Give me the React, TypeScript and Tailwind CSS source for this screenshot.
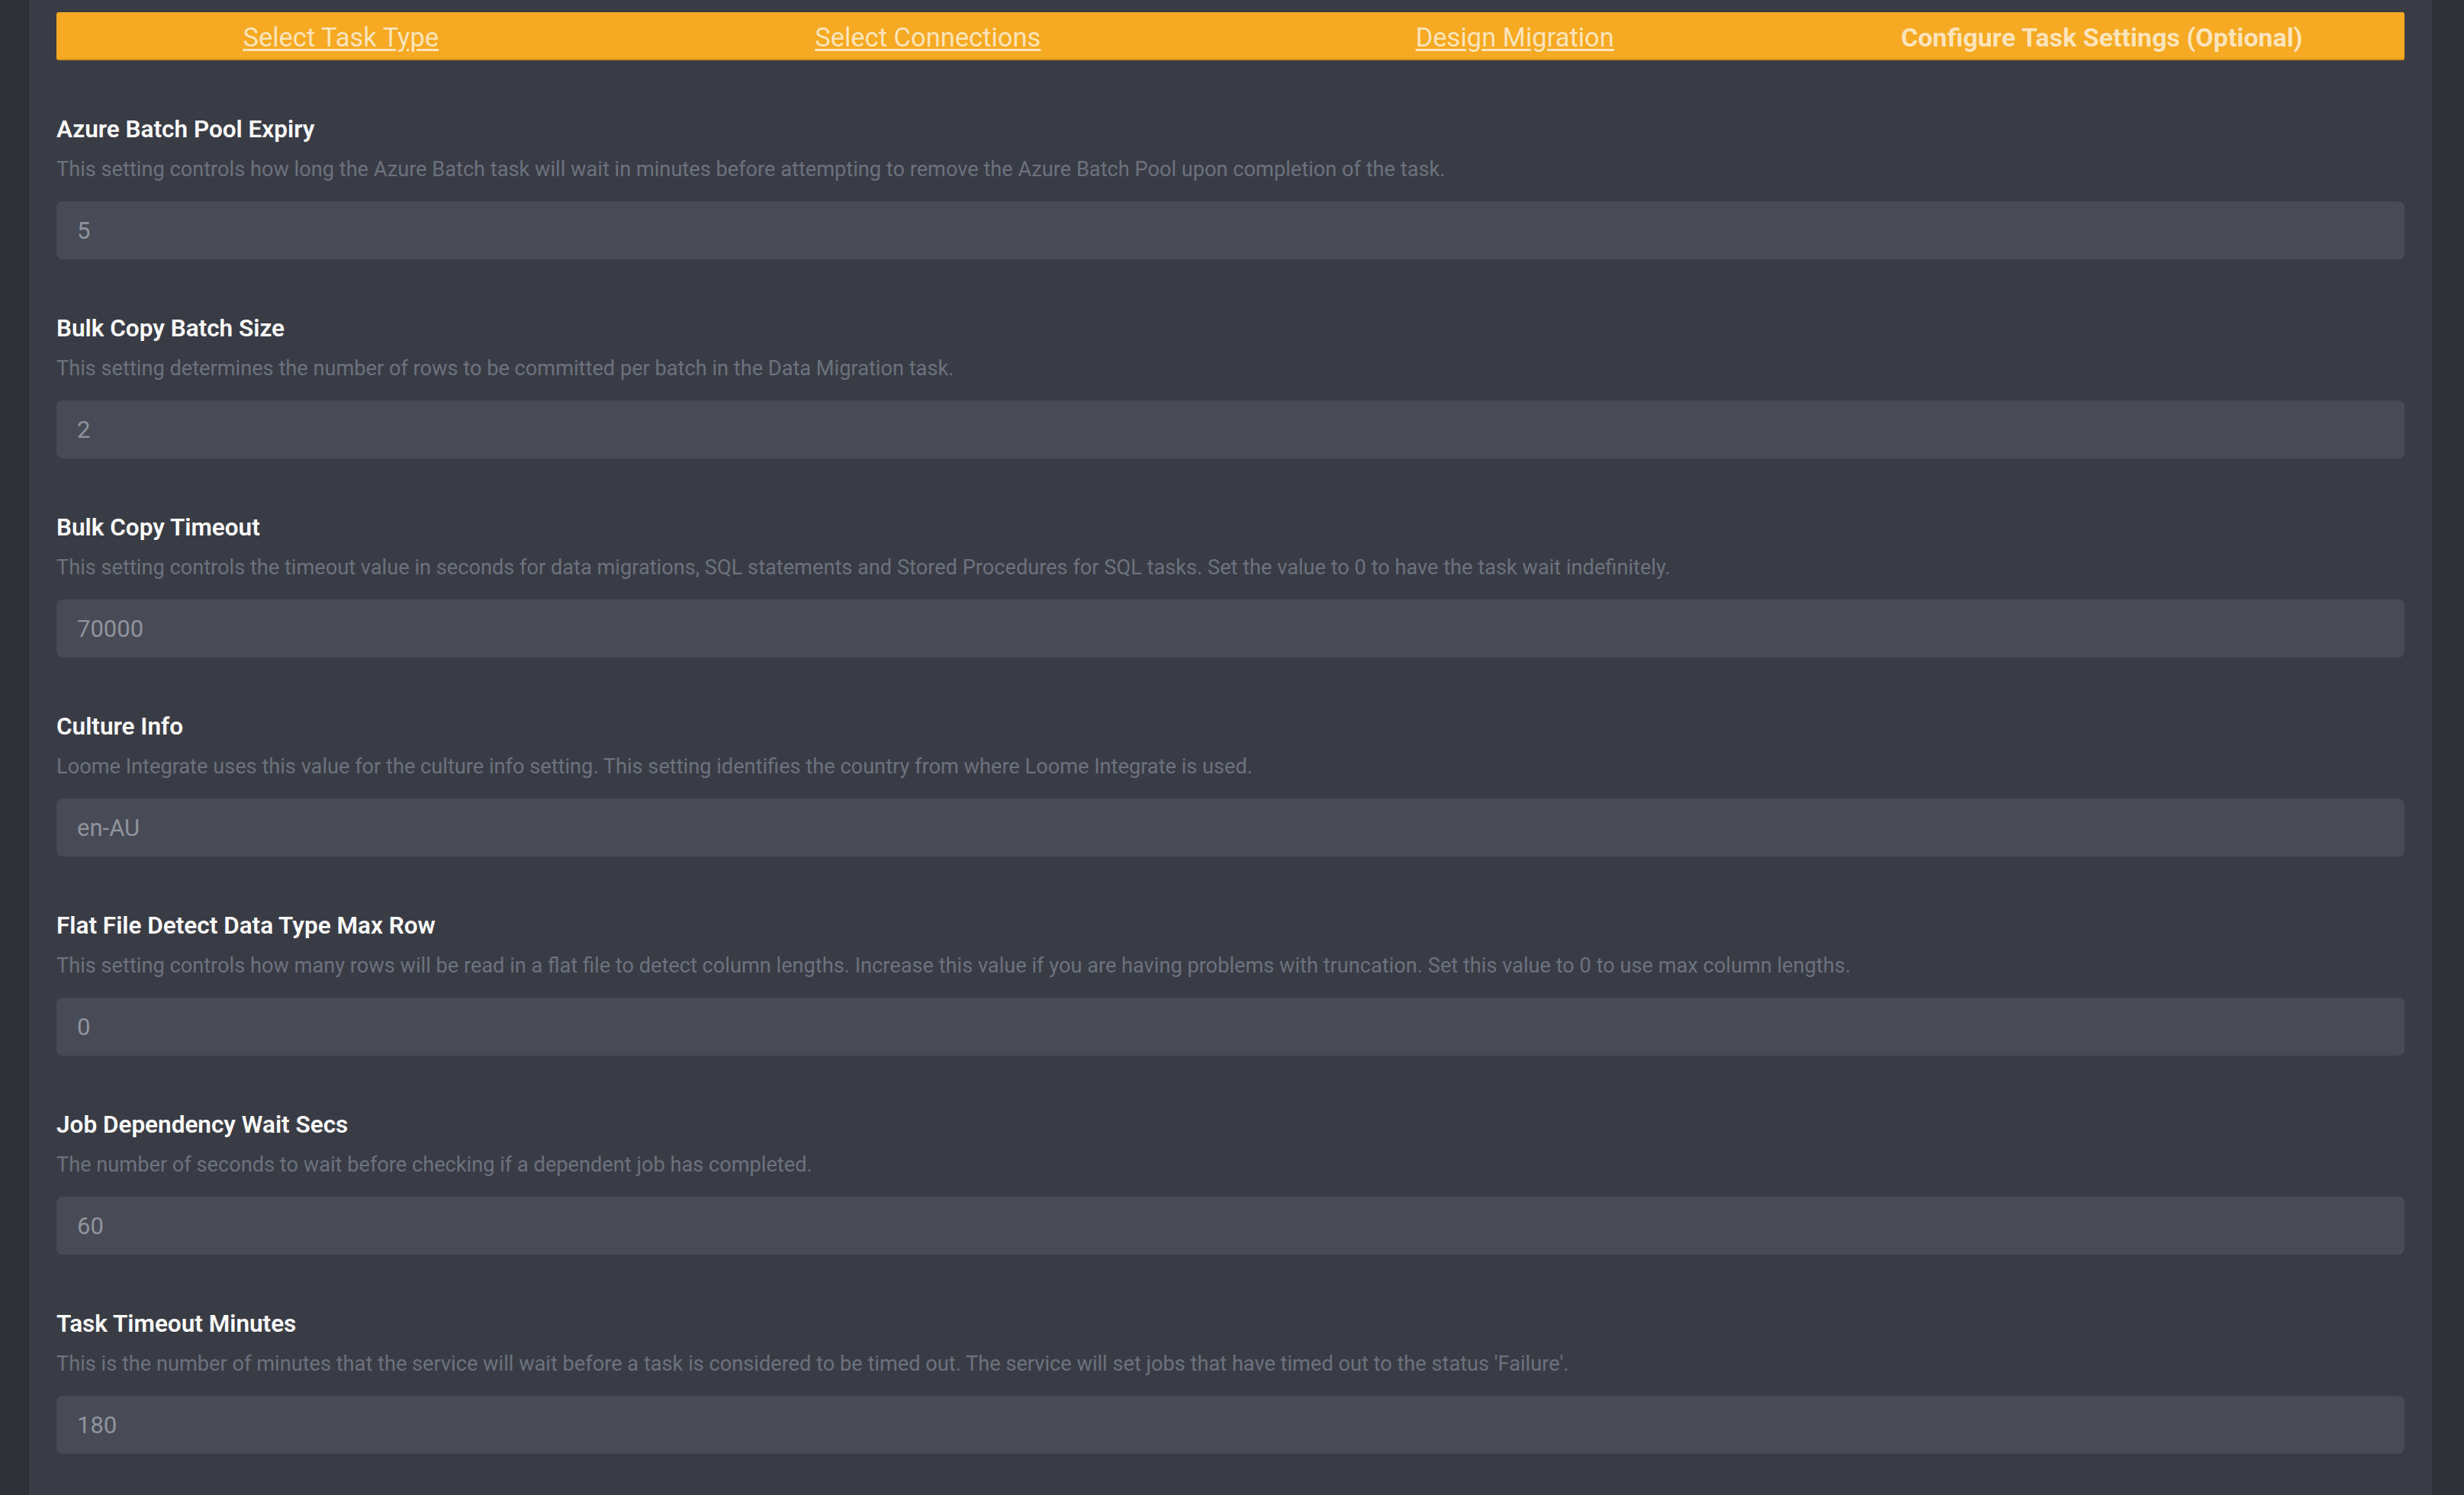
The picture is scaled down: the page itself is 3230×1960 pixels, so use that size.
const steps = [
  { label: "Select Task Type", active: false },
  { label: "Select Connections", active: false },
  { label: "Design Migration", active: false },
  { label: "Configure Task Settings (Optional)", active: true },
];

const settings = [
  {
    name: "Azure Batch Pool Expiry",
    help: "This setting controls how long the Azure Batch task will wait in minutes before attempting to remove the Azure Batch Pool upon completion of the task.",
    value: "5",
  },
  {
    name: "Bulk Copy Batch Size",
    help: "This setting determines the number of rows to be committed per batch in the Data Migration task.",
    value: "2",
  },
  {
    name: "Bulk Copy Timeout",
    help: "This setting controls the timeout value in seconds for data migrations, SQL statements and Stored Procedures for SQL tasks. Set the value to 0 to have the task wait indefinitely.",
    value: "70000",
  },
  {
    name: "Culture Info",
    help: "Loome Integrate uses this value for the culture info setting. This setting identifies the country from where Loome Integrate is used.",
    value: "en-AU",
  },
  {
    name: "Flat File Detect Data Type Max Row",
    help: "This setting controls how many rows will be read in a flat file to detect column lengths. Increase this value if you are having problems with truncation. Set this value to 0 to use max column lengths.",
    value: "0",
  },
  {
    name: "Job Dependency Wait Secs",
    help: "The number of seconds to wait before checking if a dependent job has completed.",
    value: "60",
  },
  {
    name: "Task Timeout Minutes",
    help: "This is the number of minutes that the service will wait before a task is considered to be timed out. The service will set jobs that have timed out to the status 'Failure'.",
    value: "180",
  },
];

function StepBar() {
  return (
    <div className="h-[63px] rounded-[3px] border-b-2 border-[#d8911b] bg-[#f6a922] pt-[14px]">
      <div className="-ml-[12px] mr-[12px] grid grid-cols-4">
        {steps.map((step) => (
          <div key={step.label} className="text-center">
            {step.active ? (
              <span className="text-[34px] font-bold leading-[38px] text-[#fde4ba]">{step.label}</span>
            ) : (
              <a href="#" className="text-[34.5px] leading-[38px] text-[#fde4ba] underline underline-offset-[3px]">
                {step.label}
              </a>
            )}
          </div>
        ))}
      </div>
    </div>
  );
}

function SettingField({ name, help, value }: { name: string; help: string; value: string }) {
  return (
    <div>
      <label className="block text-[31.5px] font-semibold leading-[38px] text-white">{name}</label>
      <p className="mt-[15px] text-[27.2px] leading-[36px] text-[#6c727d]">{help}</p>
      <input
        type="text"
        defaultValue={value}
        className="mt-[24px] block h-[76px] w-full rounded-[8px] border-0 bg-[#484b55] px-[27px] text-[31px] text-[#8f949c] outline-none"
      />
    </div>
  );
}

export default function App() {
  return (
    <div className="flex min-h-screen bg-[#2f3139] font-['Roboto','Liberation_Sans',sans-serif]">
      <div className="w-[38px] shrink-0" />
      <main className="flex-1 bg-[#3a3c45] px-[36px] pt-[16px] pb-[54px]">
        <StepBar />
        <div className="mt-[72px] flex flex-col gap-[72px]">
          {settings.map((s) => (
            <SettingField key={s.name} {...s} />
          ))}
        </div>
      </main>
      <div className="w-[42px] shrink-0" />
    </div>
  );
}
